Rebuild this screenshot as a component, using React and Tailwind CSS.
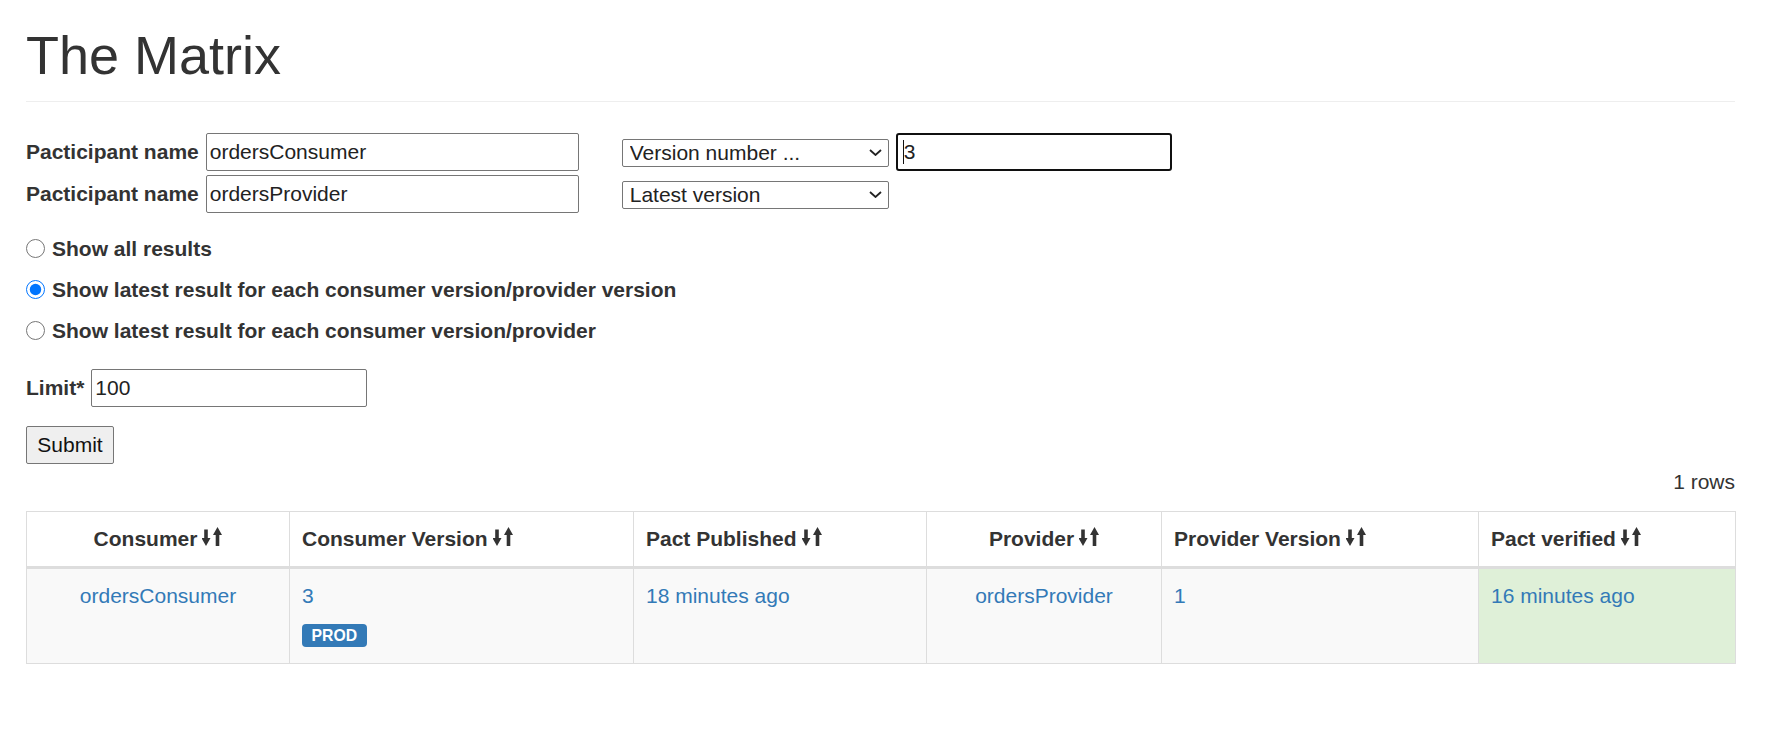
import React from 'react';

const SortIcon = () => (
  <svg className="inline-block align-baseline ml-[5px]" width="20" height="19" viewBox="0 0 20 19" fill="#333">
    <path d="M2.2 2.5h3.6v8.5h2.7l-4.5 8l-4.5-8h2.7z" />
    <path d="M13.7 19h3.6v-11h2.7l-4.5-8l-4.5 8h2.7z" />
  </svg>
);

const Chevron = () => (
  <svg className="absolute right-[7px] top-[11px] pointer-events-none" width="13" height="7" viewBox="0 0 13 7" fill="none" stroke="#222" strokeWidth="1.8">
    <path d="M1 1l5.5 5l5.5-5" />
  </svg>
);

const Select = ({ value }) => (
  <div className="relative w-[267px] h-[28px]">
    <select
      defaultValue={value}
      className="appearance-none w-full h-full border border-[#767676] rounded-[2px] bg-white pl-[7px] text-[21px] leading-[26px] text-[#222]"
    >
      <option>{value}</option>
    </select>
    <Chevron />
  </div>
);

const TextInput = ({ value, className }) => (
  <input
    defaultValue={value}
    className={`h-[38px] border border-[#767676] rounded-[2px] bg-white px-[3px] text-[21px] text-[#222] ${className}`}
  />
);

const columns = [
  { name: 'Consumer', center: true },
  { name: 'Consumer Version' },
  { name: 'Pact Published' },
  { name: 'Provider', center: true },
  { name: 'Provider Version' },
  { name: 'Pact verified' },
];

const App = () => {
  return (
    <div className="min-h-screen bg-white font-['Liberation_Sans',Arial,sans-serif] text-[21px] leading-[30px] text-[#333] pl-[26px] pr-[56px]">
      <div className="pt-[26px] pb-[16px] border-b border-[#eee]">
        <h1 className="text-[54px] leading-[59px] font-normal">The Matrix</h1>
      </div>

      <form className="mt-[31px]" onSubmit={(e) => e.preventDefault()}>
        <div className="flex flex-col gap-[4px]">
          <div className="flex items-center h-[38px]">
            <label className="font-bold">Pacticipant name</label>
            <TextInput value="ordersConsumer" className="ml-[7px] w-[373px]" />
            <div className="ml-[43px]">
              <Select value="Version number ..." />
            </div>
            <div className="ml-[7px] flex items-center w-[276px] h-[38px] border-2 border-[#101010] rounded-[3px] bg-white pl-[5px] text-[#222]">
              <span className="w-px h-[24px] bg-[#111]" />
              <span>3</span>
            </div>
          </div>
          <div className="flex items-center h-[38px]">
            <label className="font-bold">Pacticipant name</label>
            <TextInput value="ordersProvider" className="ml-[7px] w-[373px]" />
            <div className="ml-[43px]">
              <Select value="Latest version" />
            </div>
          </div>
        </div>

        <div className="mt-[15px] flex flex-col">
          {[
            'Show all results',
            'Show latest result for each consumer version/provider version',
            'Show latest result for each consumer version/provider',
          ].map((text, i) => (
            <label key={i} className="flex items-center h-[41px] font-bold">
              <input
                type="radio"
                name="latestby"
                defaultChecked={i === 1}
                className="w-[19px] h-[19px] m-0 accent-[#0075ff]"
              />
              <span className="ml-[7px]">{text}</span>
            </label>
          ))}
        </div>

        <div className="mt-[18px] flex items-center h-[38px]">
          <label className="font-bold">Limit*</label>
          <TextInput value="100" className="ml-[7px] w-[276px]" />
        </div>

        <button
          type="submit"
          className="mt-[19px] w-[88px] h-[38px] border border-[#767676] rounded-[2px] bg-[#efefef] text-[21px] text-[#111]"
        >
          Submit
        </button>
      </form>

      <div className="mt-[3px] text-right">1 rows</div>

      <table className="mt-[14px] w-full table-fixed border-collapse border border-[#ddd]">
        <colgroup>
          <col className="w-[263px]" />
          <col className="w-[344px]" />
          <col className="w-[293px]" />
          <col className="w-[235px]" />
          <col className="w-[317px]" />
          <col className="w-[257px]" />
        </colgroup>
        <thead>
          <tr className="bg-white">
            {columns.map((c) => (
              <th
                key={c.name}
                className={`p-[12px] border border-[#ddd] border-b-[3px] font-bold align-bottom ${c.center ? 'text-center' : 'text-left'}`}
              >
                {c.name}
                <SortIcon />
              </th>
            ))}
          </tr>
        </thead>
        <tbody>
          <tr className="bg-[#f9f9f9]">
            <td className="p-[12px] border border-[#ddd] align-top text-center">
              <a href="#" className="text-[#337ab7]">ordersConsumer</a>
            </td>
            <td className="p-[12px] border border-[#ddd] align-top">
              <a href="#" className="text-[#337ab7]">3</a>
              <div className="mt-[13px] mb-[4px] flex">
                <span className="h-[23px] bg-[#337ab7] text-white font-bold text-[15.75px] leading-[23px] px-[9.5px] rounded-[4px]">
                  PROD
                </span>
              </div>
            </td>
            <td className="p-[12px] border border-[#ddd] align-top">
              <a href="#" className="text-[#337ab7]">18 minutes ago</a>
            </td>
            <td className="p-[12px] border border-[#ddd] align-top text-center">
              <a href="#" className="text-[#337ab7]">ordersProvider</a>
            </td>
            <td className="p-[12px] border border-[#ddd] align-top">
              <a href="#" className="text-[#337ab7]">1</a>
            </td>
            <td className="p-[12px] border border-[#ddd] align-top bg-[#dff0d8]">
              <a href="#" className="text-[#337ab7]">16 minutes ago</a>
            </td>
          </tr>
        </tbody>
      </table>
    </div>
  );
};

export default App;
